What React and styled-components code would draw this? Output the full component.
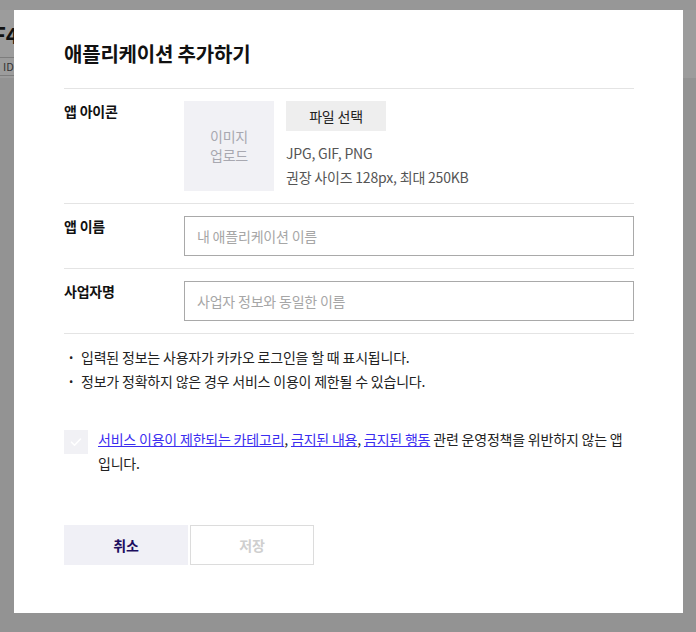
import React from 'react';
import styled, { createGlobalStyle } from 'styled-components';

const GlobalStyle = createGlobalStyle`
    html, body {
        margin: 0;
        padding: 0;
        background: #939393;
        font-family: "Noto Sans CJK KR", "Noto Sans", sans-serif;
    }
    * {
        box-sizing: border-box;
    }
`;

export default function App() {
    return (
        <Screen>
            <GlobalStyle />
            <TopStrip />
            <PageHeader>
                <PageTitle>F4</PageTitle>
                <IdTab>ID</IdTab>
            </PageHeader>

            <Modal>
                <Title>애플리케이션 추가하기</Title>

                <Row>
                    <Label>앱 아이콘</Label>
                    <IconField>
                        <UploadBox>
                            이미지
                            <br />
                            업로드
                        </UploadBox>
                        <FileInfo>
                            <FileButton type="button">파일 선택</FileButton>
                            <Hint>
                                JPG, GIF, PNG
                                <br />
                                권장 사이즈 128px, 최대 250KB
                            </Hint>
                        </FileInfo>
                    </IconField>
                </Row>

                <Row>
                    <Label>앱 이름</Label>
                    <TextInput placeholder="내 애플리케이션 이름" />
                </Row>

                <Row>
                    <Label>사업자명</Label>
                    <TextInput placeholder="사업자 정보와 동일한 이름" />
                </Row>

                <Notes>
                    <li>입력된 정보는 사용자가 카카오 로그인을 할 때 표시됩니다.</li>
                    <li>정보가 정확하지 않은 경우 서비스 이용이 제한될 수 있습니다.</li>
                </Notes>

                <Agree>
                    <CheckBox>
                        <svg width="14" height="14" viewBox="0 0 14 14" fill="none">
                            <path d="M2.5 7.2l3 3 6-6.2" stroke="#fff" strokeWidth="1.6" strokeLinecap="round" strokeLinejoin="round" />
                        </svg>
                    </CheckBox>
                    <AgreeText>
                        <Link href="#">서비스 이용이 제한되는 카테고리</Link>, <Link href="#">금지된 내용</Link>,{' '}
                        <Link href="#">금지된 행동</Link> 관련 운영정책을 위반하지 않는 앱 입니다.
                    </AgreeText>
                </Agree>

                <Actions>
                    <ActionButton type="button" $primary>취소</ActionButton>
                    <ActionButton type="button" disabled>저장</ActionButton>
                </Actions>
            </Modal>
        </Screen>
    );
}

const Screen = styled.div`
    position: relative;
    width: 696px;
    height: 632px;
    overflow: hidden;
    background: #939393;
`;

const TopStrip = styled.div`
    height: 10px;
    background: #979797;
`;

const PageHeader = styled.div`
    height: 68px;
    background: #9c9c9c;
    padding-top: 11px;
`;

const PageTitle = styled.div`
    margin-left: -7px;
    font-size: 22px;
    font-weight: 700;
    line-height: 26px;
    color: #111;
`;

const IdTab = styled.div`
    margin-top: 10px;
    margin-left: -10px;
    width: 25px;
    height: 19px;
    padding-left: 12px;
    border: 1px solid #7d7d7d;
    font-size: 11px;
    line-height: 17px;
    color: #333;
`;

const Modal = styled.div`
    position: absolute;
    left: 14px;
    top: 10px;
    width: 669px;
    height: 603px;
    background: #fff;
    padding: 27px 49px 0 50px;
    letter-spacing: -0.2px;
`;

const Title = styled.h2`
    margin: 0 0 17px;
    font-size: 20px;
    font-weight: 700;
    line-height: 34px;
    color: #111;
`;

const Row = styled.div`
    display: flex;
    align-items: flex-start;
    padding: 12px 0;
    border-top: 1px solid #e4e4e4;
`;

const Label = styled.div`
    width: 120px;
    flex-shrink: 0;
    font-size: 14px;
    font-weight: 700;
    line-height: 20px;
    color: #111;
`;

const IconField = styled.div`
    display: flex;
    gap: 12px;
`;

const UploadBox = styled.div`
    width: 90px;
    height: 90px;
    background: #f1f1f5;
    display: flex;
    align-items: center;
    justify-content: center;
    text-align: center;
    font-size: 14px;
    line-height: 19px;
    color: #a8a8b0;
`;

const FileInfo = styled.div`
    display: flex;
    flex-direction: column;
    align-items: flex-start;
`;

const FileButton = styled.button`
    width: 100px;
    height: 30px;
    border: 0;
    background: #eeeeee;
    font-family: inherit;
    font-size: 14px;
    letter-spacing: inherit;
    color: #222;
    padding: 0;
`;

const Hint = styled.div`
    margin-top: 10px;
    font-size: 14px;
    line-height: 24px;
    color: #555;
`;

const TextInput = styled.input`
    flex: 1;
    height: 40px;
    border: 1px solid #a9a9a9;
    padding: 0 12px;
    font-family: inherit;
    font-size: 14px;
    letter-spacing: inherit;
    color: #222;
    outline: none;
    &::placeholder {
        color: #a6a6a6;
    }
`;

const Notes = styled.ul`
    list-style: none;
    margin: 0;
    padding: 11px 0 0;
    border-top: 1px solid #e4e4e4;
    li {
        position: relative;
        padding-left: 17px;
        font-size: 14px;
        line-height: 24px;
        color: #222;
    }
    li::before {
        content: '·';
        position: absolute;
        left: 3px;
        top: 0;
        font-weight: 700;
    }
`;

const Agree = styled.div`
    display: flex;
    gap: 10px;
    margin-top: 34px;
`;

const CheckBox = styled.span`
    width: 24px;
    height: 24px;
    flex-shrink: 0;
    margin-top: 3px;
    background: #f1f1f5;
    display: flex;
    align-items: center;
    justify-content: center;
`;

const AgreeText = styled.p`
    margin: 0;
    font-size: 14px;
    line-height: 24px;
    color: #222;
`;

const Link = styled.a`
    color: #3b2df0;
    text-decoration: underline;
`;

const Actions = styled.div`
    display: flex;
    gap: 2px;
    margin-top: 50px;
`;

const ActionButton = styled.button`
    width: 124px;
    height: 40px;
    font-family: inherit;
    font-size: 14px;
    font-weight: 700;
    letter-spacing: inherit;
    background: ${(p) => (p.$primary ? '#f0f0f6' : '#fff')};
    color: ${(p) => (p.$primary ? '#1c0d5e' : '#cfcfcf')};
    border: ${(p) => (p.$primary ? '0' : '1px solid #dcdcdc')};
    padding: 0;
`;
